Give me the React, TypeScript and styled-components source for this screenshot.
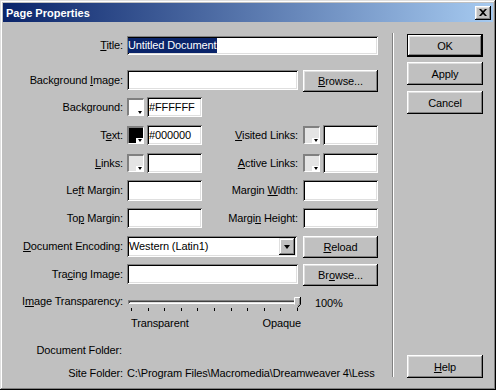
import React from 'react';
import styled, { createGlobalStyle } from 'styled-components';

const GlobalStyle = createGlobalStyle`
  html, body {
    margin: 0;
    padding: 0;
    background: #c0c0c0;
  }
  body {
    font-family: "Liberation Sans", Arial, sans-serif;
    font-size: 11px;
    letter-spacing: -0.12px;
    color: #000;
  }
`;

const Window = styled.div`
  box-sizing: border-box;
  width: 496px;
  height: 390px;
  padding: 3px;
  background: #c0c0c0;
  box-shadow: inset -1px -1px #000, inset 1px 1px #dfdfdf, inset -2px -2px #808080, inset 2px 2px #fff;
  display: flex;
  flex-direction: column;
`;

const TitleBar = styled.div`
  height: 19px;
  display: flex;
  justify-content: space-between;
  align-items: center;
  padding: 0 2px 0 3px;
  background: linear-gradient(90deg, #0a246a, #a6caf0);
`;

const TitleText = styled.span`
  color: #fff;
  font-weight: bold;
  font-size: 11px;
  letter-spacing: 0;
`;

const CloseButton = styled.div`
  width: 16px;
  height: 14px;
  display: flex;
  align-items: center;
  justify-content: center;
  background: #c0c0c0;
  box-shadow: inset -1px -1px #000, inset 1px 1px #fff, inset -2px -2px #808080, inset 2px 2px #dfdfdf;
`;

const Body = styled.div`
  display: flex;
  padding-top: 11px;
`;

const FormPane = styled.div`
  width: 381px;
  padding-left: 8px;
  display: flex;
  flex-direction: column;
`;

const Separator = styled.div`
  width: 0;
  height: 344px;
  border-left: 1px solid #808080;
  border-right: 1px solid #fff;
`;

const ButtonColumn = styled.div`
  height: 344px;
  padding: 1px 0 0 13px;
  display: flex;
  flex-direction: column;
`;

const Row = styled.div<{ $mt: number; $h: number }>`
  display: flex;
  align-items: flex-start;
  margin-top: ${(p) => p.$mt}px;
  height: ${(p) => p.$h}px;
`;

const Label = styled.div<{ $w?: number; $lh?: number; $mr?: number }>`
  width: ${(p) => p.$w ?? 112}px;
  margin-right: ${(p) => p.$mr ?? 4}px;
  line-height: ${(p) => p.$lh ?? 20}px;
  text-align: right;
  white-space: nowrap;
  flex-shrink: 0;
`;

const U = styled.span`
  text-decoration: underline;
  text-underline-offset: 1px;
`;

const TextField = styled.div<{ $w: number; $h?: number }>`
  box-sizing: border-box;
  width: ${(p) => p.$w}px;
  height: ${(p) => p.$h ?? 20}px;
  padding: 2px 2px 0 2px;
  line-height: ${(p) => (p.$h ?? 20) - 4}px;
  background: #fff;
  box-shadow: inset 1px 1px #808080, inset -1px -1px #fff, inset 2px 2px #000, inset -2px -2px #dfdfdf;
  white-space: nowrap;
  overflow: hidden;
  flex-shrink: 0;
`;

const Selected = styled.span`
  display: inline-block;
  background: #0a246a;
  color: #fff;
  padding: 0 1px 0 0;
  margin-left: -1px;
`;

const Button = styled.div<{ $w?: number; $h?: number; $ml?: number; $mt?: number; $default?: boolean }>`
  box-sizing: border-box;
  width: ${(p) => p.$w ?? 75}px;
  height: ${(p) => p.$h ?? 22}px;
  margin-left: ${(p) => p.$ml ?? 0}px;
  margin-top: ${(p) => p.$mt ?? 0}px;
  display: flex;
  align-items: center;
  justify-content: center;
  background: #c0c0c0;
  border: ${(p) => (p.$default ? '1px solid #000' : 'none')};
  box-shadow: inset -1px -1px #000, inset 1px 1px #fff, inset -2px -2px #808080, inset 2px 2px #dfdfdf;
  flex-shrink: 0;
`;

const DialogButton = styled(Button)`
  width: 76px;
  height: 23px;
`;

const HelpButton = styled(DialogButton)`
  margin-top: auto;
`;

const Swatch = styled.div<{ $color: string; $ml?: number }>`
  position: relative;
  box-sizing: border-box;
  width: 17px;
  height: 18px;
  margin: 1px 3px 0 ${(p) => p.$ml ?? 0}px;
  background: ${(p) => p.$color};
  border-top: 2px solid #808080;
  border-left: 2px solid #808080;
  border-right: 1px solid #fff;
  border-bottom: 1px solid #fff;
  flex-shrink: 0;
`;

const SwatchArrow = styled.div`
  position: absolute;
  right: 0;
  bottom: 0;
  width: 7px;
  height: 5px;
  background: #fff;
  display: flex;
  align-items: center;
  justify-content: center;
  &::after {
    content: '';
    border-left: 2.5px solid transparent;
    border-right: 2.5px solid transparent;
    border-top: 3px solid #000;
  }
`;

const Combo = styled(TextField)`
  display: flex;
  justify-content: space-between;
  padding: 2px;
  line-height: 17px;
`;

const ComboButton = styled.div`
  width: 16px;
  height: 17px;
  display: flex;
  align-items: center;
  justify-content: center;
  background: #c0c0c0;
  box-shadow: inset -1px -1px #000, inset 1px 1px #dfdfdf, inset -2px -2px #808080, inset 2px 2px #fff;
  &::after {
    content: '';
    border-left: 3.5px solid transparent;
    border-right: 3.5px solid transparent;
    border-top: 4px solid #000;
  }
`;

const SliderBox = styled.div`
  position: relative;
  width: 174px;
  height: 18px;
  flex-shrink: 0;
`;

const Track = styled.div`
  margin: 6px 0 0 1px;
  width: 171px;
  height: 4px;
  box-shadow: inset 1px 1px #808080, inset -1px -1px #fff, inset 2px 2px #404040, inset -2px -2px #dfdfdf;
  background: #c0c0c0;
`;

const Ticks = styled.div`
  margin-top: 4px;
  padding: 0 3px 0 4px;
  height: 4px;
  display: flex;
  justify-content: space-between;
`;

const Tick = styled.div`
  width: 1px;
  height: 3px;
  background: #000;
`;

const Thumb = styled.svg`
  position: absolute;
  right: 0;
  top: 3px;
`;

const Percent = styled.div`
  margin: 2px 0 0 14px;
  line-height: 14px;
`;

const TickLabels = styled.div`
  display: flex;
  justify-content: space-between;
  width: 170px;
  margin: 4px 0 0 120px;
  line-height: 14px;
`;

const InfoRow = styled.div<{ $mt: number }>`
  display: flex;
  margin-top: ${(p) => p.$mt}px;
  line-height: 14px;
  white-space: nowrap;
`;

const App: React.FC = () => {
  const ticks = Array.from({ length: 11 });

  return (
    <>
      <GlobalStyle />
      <Window>
        <TitleBar>
          <TitleText>Page Properties</TitleText>
          <CloseButton>
            <svg width="8" height="7" viewBox="0 0 8 7">
              <path d="M0 0h2l2 2 2-2h2L5 3.5 8 7H6L4 5 2 7H0l3-3.5z" fill="#000" />
            </svg>
          </CloseButton>
        </TitleBar>

        <Body>
          <FormPane>
            <Row $mt={3} $h={19}>
              <Label $lh={19}><U>T</U>itle:</Label>
              <TextField $w={251} $h={19}>
                <Selected>Untitled Document</Selected>
              </TextField>
            </Row>

            <Row $mt={15} $h={22}>
              <Label>Background <U>I</U>mage:</Label>
              <TextField $w={171} />
              <Button $ml={5}><span><U>B</U>rowse...</span></Button>
            </Row>

            <Row $mt={5} $h={20}>
              <Label>Background:</Label>
              <Swatch $color="#fff"><SwatchArrow /></Swatch>
              <TextField $w={55}>#FFFFFF</TextField>
            </Row>

            <Row $mt={8} $h={20}>
              <Label>T<U>e</U>xt:</Label>
              <Swatch $color="#000"><SwatchArrow /></Swatch>
              <TextField $w={55}>#000000</TextField>
              <Label $w={96} $mr={5}><U>V</U>isited Links:</Label>
              <Swatch $color="#e4e4e4"><SwatchArrow /></Swatch>
              <TextField $w={55} />
            </Row>

            <Row $mt={8} $h={20}>
              <Label><U>L</U>inks:</Label>
              <Swatch $color="#e4e4e4"><SwatchArrow /></Swatch>
              <TextField $w={55} />
              <Label $w={96} $mr={5}><U>A</U>ctive Links:</Label>
              <Swatch $color="#e4e4e4"><SwatchArrow /></Swatch>
              <TextField $w={55} />
            </Row>

            <Row $mt={7} $h={21}>
              <Label $lh={21}>Le<U>f</U>t Margin:</Label>
              <TextField $w={75} $h={21} />
              <Label $w={96} $mr={5} $lh={21}>Margin <U>W</U>idth:</Label>
              <TextField $w={75} $h={21} />
            </Row>

            <Row $mt={7} $h={20}>
              <Label>To<U>p</U> Margin:</Label>
              <TextField $w={75} />
              <Label $w={96} $mr={5}>Margi<U>n</U> Height:</Label>
              <TextField $w={75} />
            </Row>

            <Row $mt={8} $h={22}>
              <Label $lh={21}><U>D</U>ocument Encoding:</Label>
              <Combo $w={170} $h={21}>
                <span>Western (Latin1)</span>
                <ComboButton />
              </Combo>
              <Button $ml={6}><span><U>R</U>eload</span></Button>
            </Row>

            <Row $mt={6} $h={22}>
              <Label>Tra<U>c</U>ing Image:</Label>
              <TextField $w={171} />
              <Button $ml={5}><span>Br<U>o</U>wse...</span></Button>
            </Row>

            <Row $mt={8} $h={18}>
              <Label $lh={15}>I<U>m</U>age Transparency:</Label>
              <SliderBox>
                <Track />
                <Ticks>
                  {ticks.map((_, i) => (
                    <Tick key={i} />
                  ))}
                </Ticks>
                <Thumb width="7" height="11" viewBox="0 0 7 11">
                  <path d="M0 0H7V7.5L3.5 11L0 7.5Z" fill="#c0c0c0" />
                  <path d="M0.5 7.5V0.5H6" stroke="#fff" fill="none" />
                  <path d="M6.5 0V7.5L3.5 10.5" stroke="#000" fill="none" />
                  <path d="M5.5 1V7L3.5 9" stroke="#808080" fill="none" />
                </Thumb>
              </SliderBox>
              <Percent>100%</Percent>
            </Row>

            <TickLabels>
              <span>Transparent</span>
              <span>Opaque</span>
            </TickLabels>

            <InfoRow $mt={13}>
              <Label $lh={14} $w={111}>Document Folder:</Label>
            </InfoRow>

            <InfoRow $mt={9}>
              <Label $lh={14}>Site Folder:</Label>
              <span>{'C:\\Program Files\\Macromedia\\Dreamweaver 4\\Less'}</span>
            </InfoRow>
          </FormPane>

          <Separator />

          <ButtonColumn>
            <DialogButton $default>OK</DialogButton>
            <DialogButton $mt={5}>Apply</DialogButton>
            <DialogButton $mt={6}>Cancel</DialogButton>
            <HelpButton><span><U>H</U>elp</span></HelpButton>
          </ButtonColumn>
        </Body>
      </Window>
    </>
  );
};

export default App;
